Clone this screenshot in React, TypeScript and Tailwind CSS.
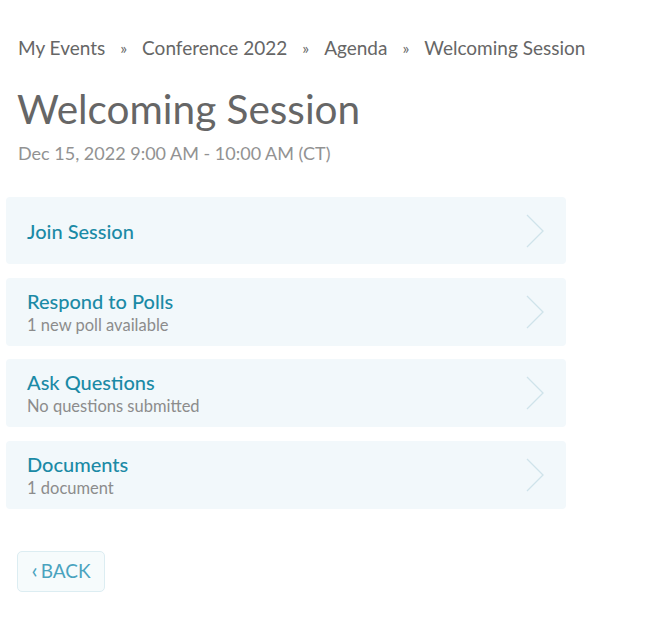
const crumbs = ["My Events", "Conference 2022", "Agenda", "Welcoming Session"];

const items = [
  { title: "Join Session", sub: "" },
  { title: "Respond to Polls", sub: "1 new poll available" },
  { title: "Ask Questions", sub: "No questions submitted" },
  { title: "Documents", sub: "1 document" },
];

function Chevron() {
  return (
    <svg width="18" height="34" viewBox="0 0 18 34" fill="none" className="shrink-0">
      <path d="M1 1l16 16L1 33" stroke="#cfe3ea" strokeWidth="1.3" />
    </svg>
  );
}

export default function App() {
  return (
    <div
      className="min-h-[621px] w-[657px] bg-white pt-[36px]"
      style={{ fontFamily: "Lato, 'Noto Sans', sans-serif" }}
    >
      <nav className="flex items-center pl-[18px] text-[19px] text-[#666] leading-6">
        {crumbs.map((c, i) => (
          <span key={c} className="flex items-center">
            {i > 0 && <span className="px-[15px] text-[16px]">»</span>}
            <span>{c}</span>
          </span>
        ))}
      </nav>

      <h1 className="mt-[27px] pl-[17px] text-[40.5px] leading-[44px] text-[#666] font-normal">
        Welcoming Session
      </h1>
      <div className="mt-[10px] pl-[18px] text-[18px] leading-6 text-[#929292]">
        Dec 15, 2022 9:00 AM - 10:00 AM (CT)
      </div>

      <div className="mt-[32px] flex w-[561px] flex-col gap-[13.5px] pl-[6px]">
        {items.map((it) => (
          <button
            key={it.title}
            className={`flex w-[560px] items-center justify-between rounded-[4px] bg-[#f2f8fb] pl-[21px] pr-[22px] text-left ${
              it.sub ? "h-[68px]" : "h-[67px]"
            }`}
          >
            <div className="flex flex-col">
              <span className="text-[20px] leading-6 font-medium text-[#1b8aa6]">{it.title}</span>
              {it.sub && (
                <span className="mt-[2px] text-[16.5px] leading-5 text-[#8c8c8c]">{it.sub}</span>
              )}
            </div>
            <Chevron />
          </button>
        ))}
      </div>

      <button className="ml-[17px] mt-[42px] flex h-[41px] w-[88px] items-center justify-center gap-[3px] rounded-[5px] border border-[#dcedf2] bg-[#f6fbfc] text-[19px] text-[#4aa3bf]">
        <span className="text-[22px] leading-none -mt-[2px]">‹</span>
        <span>BACK</span>
      </button>
    </div>
  );
}
